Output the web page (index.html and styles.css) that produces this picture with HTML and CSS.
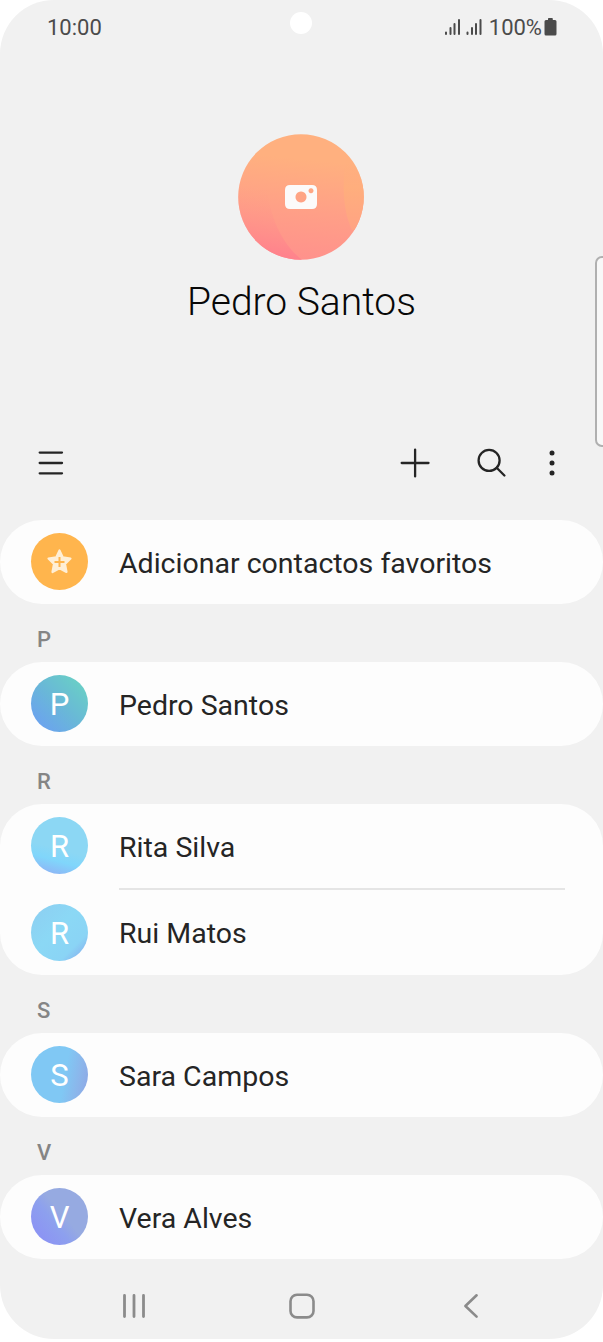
FILE: index.html
```html
<!DOCTYPE html>
<html lang="pt">
<head>
<meta charset="utf-8">
<title>Contactos</title>
<link rel="stylesheet" href="styles.css">
</head>
<body>
<main class="phone">
  <header class="status">
    <span class="time">10:00</span>
    <div class="indicators">
      <svg class="signal" width="38" height="18" viewBox="0 0 38 18" fill="none" stroke="#4b4b4b" stroke-width="2" stroke-linecap="round">
        <path d="M2 14.500V16M6.500 10V16M10.500 6V16M15 2V16M23.500 14.500V16M28 10V16M32 6V16M36.500 2V16"/>
      </svg>
      <span class="percent">100%</span>
      <svg width="13" height="19" viewBox="0 0 13 19" fill="#4b4b4b"><path d="M4 2V.8Q4 0 4.800 0H8Q8.800 0 8.800 .8V2H11Q12.500 2 12.500 3.500V16Q12.500 17.500 11 17.500H2Q.5 17.500 .5 16V3.500Q.5 2 2 2Z"/></svg>
    </div>
    <span class="camera-hole"></span>
  </header>

  <section class="profile">
    <svg class="photo" width="126" height="126" viewBox="0 0 126 126">
      <defs>
        <linearGradient id="sunset" x1=".55" y1="0" x2=".45" y2="1"><stop offset=".2" stop-color="#ffb07f"/><stop offset=".62" stop-color="#ff9f87"/><stop offset="1" stop-color="#ff918c"/></linearGradient>
        <linearGradient id="pink" gradientUnits="userSpaceOnUse" x1="30" y1="55" x2="18" y2="122"><stop offset="0" stop-color="#ff9f87" stop-opacity="0"/><stop offset="1" stop-color="#ff7f8d"/></linearGradient>
        <linearGradient id="amber" x1="0" y1="0" x2="0" y2="1"><stop offset="0" stop-color="#ffb07d" stop-opacity="0"/><stop offset=".4" stop-color="#ffae7d"/><stop offset="1" stop-color="#ffa383"/></linearGradient>
        <clipPath id="disc"><circle cx="63" cy="63" r="62.800"/></clipPath>
      </defs>
      <g clip-path="url(#disc)">
        <path d="M0 0H126V126H0Z" fill="url(#sunset)"/>
        <path d="M0 0H30C22 55 34 102 64 126H0Z" fill="url(#pink)"/>
        <path d="M107 25H126V96H114Q104 75 106 42Z" fill="url(#amber)"/>
      </g>
      <path fill="#fcfafa" fill-rule="evenodd" d="M52 51H74Q79 51 79 56V70Q79 75 74 75H52Q47 75 47 70V56Q47 51 52 51ZM63 57.500a5.500 5.500 0 1 0 .01 0ZM73 54.300a2.500 2.500 0 1 0 .01 0Z"/>
    </svg>
    <h1 class="owner">Pedro Santos</h1>
  </section>

  <nav class="toolbar">
    <svg width="26" height="30" viewBox="0 0 26 30" fill="none" stroke="#252525" stroke-width="2.300" stroke-linecap="round"><path d="M1.700 4.600H24M1.700 15H24M1.700 25.300H24"/></svg>
    <div class="actions">
      <svg width="30" height="30" viewBox="0 0 30 30" fill="none" stroke="#252525" stroke-width="2.300" stroke-linecap="round"><path d="M1.700 15H28.500M15.100 1.600V28.400"/></svg>
      <svg width="30" height="30" viewBox="0 0 30 30" fill="none" stroke="#252525" stroke-width="2.300" stroke-linecap="round"><circle cx="13.100" cy="12.400" r="10.500"/><path d="M20.700 19.800L28.400 27.500"/></svg>
      <svg width="6" height="30" viewBox="0 0 6 30" fill="#252525"><circle cx="3" cy="5" r="2.500"/><circle cx="3" cy="15" r="2.500"/><circle cx="3" cy="25" r="2.500"/></svg>
    </div>
  </nav>

  <section class="card">
    <div class="row">
      <span class="avatar gold">
        <svg width="57" height="57" viewBox="0 0 57 57"><path d="M28.500 17.500L31.800 24.400L39.500 25.500L34 31L35.500 39L28.500 35.300L21.500 39L23 31L17.500 25.500L25.200 24.400Z" fill="#ffefd6" stroke="#ffefd6" stroke-width="2.200" stroke-linejoin="round"/><path d="M28.500 24V34M23.500 29H33.500" stroke="#ffb54d" stroke-width="2"/></svg>
      </span>
      <span class="name">Adicionar contactos favoritos</span>
    </div>
  </section>

  <h2 class="letter">P</h2>
  <section class="card">
    <div class="row"><span class="avatar teal">P</span><span class="name">Pedro Santos</span></div>
  </section>

  <h2 class="letter">R</h2>
  <section class="card double">
    <div class="row"><span class="avatar sky">R</span><span class="name">Rita Silva</span></div>
    <hr class="divider">
    <div class="row"><span class="avatar cyan">R</span><span class="name">Rui Matos</span></div>
  </section>

  <h2 class="letter">S</h2>
  <section class="card">
    <div class="row"><span class="avatar blue">S</span><span class="name">Sara Campos</span></div>
  </section>

  <h2 class="letter">V</h2>
  <section class="card">
    <div class="row"><span class="avatar violet">V</span><span class="name">Vera Alves</span></div>
  </section>

  <footer class="system-nav">
    <svg width="26" height="26" viewBox="0 0 26 26" fill="none" stroke="#8b8b8b" stroke-width="2.800" stroke-linecap="round"><path d="M3.500 2.500V23.500M13 2.500V23.500M22.500 2.500V23.500"/></svg>
    <svg width="26" height="26" viewBox="0 0 26 26" fill="none" stroke="#8b8b8b" stroke-width="2.600"><rect x="1.500" y="1.800" width="23" height="22.600" rx="6.500"/></svg>
    <svg width="16" height="26" viewBox="0 0 16 26" fill="none" stroke="#8b8b8b" stroke-width="2.600" stroke-linecap="round" stroke-linejoin="round"><path d="M13.600 2.300L2.400 13L13.600 23.600"/></svg>
  </footer>
  <span class="edge-handle"></span>
</main>
</body>
</html>
```
FILE: styles.css
```css
* { box-sizing: border-box; }
body { margin: 0; background: #fff; font-family: Roboto, "Liberation Sans", sans-serif; }
svg { display: block; flex: none; }

.phone {
  position: relative;
  display: flex;
  flex-direction: column;
  width: 603px;
  height: 1338.5px;
  overflow: hidden;
  border-radius: 54px;
  background: #f1f1f1;
}
.phone > * { flex: none; }

.status {
  display: flex;
  justify-content: space-between;
  align-items: center;
  height: 54px;
  padding: 0 46px 0 47px;
  color: #4b4b4b;
  font-size: 22px;
}
.indicators { display: flex; align-items: center; }
.signal { margin-right: 7px; }
.percent { margin-right: 2px; }
.camera-hole {
  position: absolute;
  top: 12px;
  left: 290px;
  width: 22px;
  height: 22px;
  border-radius: 50%;
  background: #fff;
}

.profile {
  display: flex;
  flex-direction: column;
  align-items: center;
  height: 376px;
  padding-top: 80px;
}
.photo { margin-right: 1px; }
.owner {
  margin: 19px 0 0;
  color: #080808;
  font-size: 39px;
  font-weight: 300;
  line-height: 46px;
}

.toolbar {
  display: flex;
  justify-content: space-between;
  align-items: center;
  height: 66px;
  margin-bottom: 23.5px;
  padding: 0 48px 0 37.5px;
}
.actions { display: flex; }
.actions svg:nth-child(2) { margin: 0 43px 0 46px; }

.card { height: 84.5px; border-radius: 42px; background: #fdfdfd; }
.card.double { height: 171.5px; }
.row { display: flex; align-items: center; gap: 31px; height: 84.5px; padding-left: 31px; }
.avatar {
  display: grid;
  place-items: center;
  width: 57px;
  height: 57px;
  border-radius: 50%;
  color: #fff;
  font-size: 31px;
  line-height: 59px;
}
.name { padding-top: 4px; color: #252525; font-size: 28.5px; line-height: 36px; }
.divider { height: 2px; margin: 0 38px 0 119px; border: 0; background: #e5e5e5; }
.letter {
  height: 57.5px;
  margin: 0;
  padding: 7px 0 0 37px;
  color: #858585;
  font-size: 22px;
  font-weight: 500;
  line-height: 57px;
}

.gold { background: #ffb54d; }
.teal { background: linear-gradient(45deg, #6ba4ed 15%, #69b9d6 52%, #69d0c5 90%); }
.sky { background: linear-gradient(195deg, #8cd7f4 55%, #80d6fb 72%, #8fb2f5 95%); }
.cyan { background: linear-gradient(135deg, #8dcef1, #8bd8f5 45%, #8ad4f5 75%, #88baf0 88%); }
.blue { background: linear-gradient(100deg, #80c8f4 58%, #8bb6eb 80%, #8ea5e4); }
.violet { background: linear-gradient(50deg, #8c95f3 18%, #8da0ee 40%, #96aae1 55%); }

.system-nav {
  display: flex;
  align-items: center;
  height: 79.5px;
  padding: 13.5px 0 0 121px;
}
.system-nav svg:nth-child(2) { margin: 0 148px 0 142px; }
.edge-handle {
  position: absolute;
  top: 256px;
  left: 595px;
  width: 14px;
  height: 191px;
  border: 2px solid #b0b0b0;
  border-radius: 8px;
  background: #f8f8f8;
}
```
